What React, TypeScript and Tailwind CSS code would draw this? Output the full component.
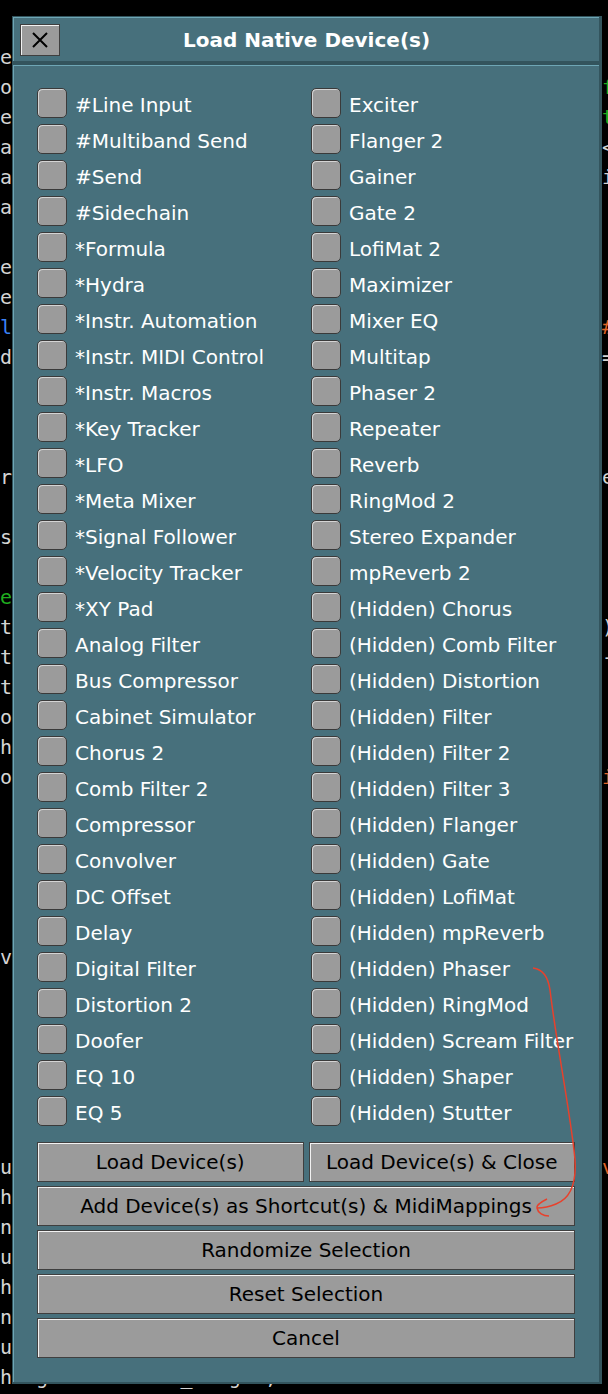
import React from 'react';

const leftDevices = [
  '#Line Input',
  '#Multiband Send',
  '#Send',
  '#Sidechain',
  '*Formula',
  '*Hydra',
  '*Instr. Automation',
  '*Instr. MIDI Control',
  '*Instr. Macros',
  '*Key Tracker',
  '*LFO',
  '*Meta Mixer',
  '*Signal Follower',
  '*Velocity Tracker',
  '*XY Pad',
  'Analog Filter',
  'Bus Compressor',
  'Cabinet Simulator',
  'Chorus 2',
  'Comb Filter 2',
  'Compressor',
  'Convolver',
  'DC Offset',
  'Delay',
  'Digital Filter',
  'Distortion 2',
  'Doofer',
  'EQ 10',
  'EQ 5',
];

const rightDevices = [
  'Exciter',
  'Flanger 2',
  'Gainer',
  'Gate 2',
  'LofiMat 2',
  'Maximizer',
  'Mixer EQ',
  'Multitap',
  'Phaser 2',
  'Repeater',
  'Reverb',
  'RingMod 2',
  'Stereo Expander',
  'mpReverb 2',
  '(Hidden) Chorus',
  '(Hidden) Comb Filter',
  '(Hidden) Distortion',
  '(Hidden) Filter',
  '(Hidden) Filter 2',
  '(Hidden) Filter 3',
  '(Hidden) Flanger',
  '(Hidden) Gate',
  '(Hidden) LofiMat',
  '(Hidden) mpReverb',
  '(Hidden) Phaser',
  '(Hidden) RingMod',
  '(Hidden) Scream Filter',
  '(Hidden) Shaper',
  '(Hidden) Stutter',
];

// code editor behind the dialog, only the edges show
interface CodeLine {
  left: string
  leftColor?: string
  right?: string
  rightColor?: string
}

const codeLines: CodeLine[] = [
  { left: 'e' },
  { left: 'o', right: 'f', rightColor: 'text-[#1fae1f]' },
  { left: 'e', right: 't', rightColor: 'text-[#1fae1f]' },
  { left: 'a', right: '<' },
  { left: 'a', right: 'i' },
  { left: 'a' },
  { left: ' ' },
  { left: 'e' },
  { left: 'e' },
  { left: 'l', leftColor: 'text-[#3b82f6]', right: '#', rightColor: 'text-[#e0662a]' },
  { left: 'd', right: '=' },
  { left: ' ' },
  { left: ' ' },
  { left: ' ' },
  { left: 'r', right: 'e' },
  { left: ' ' },
  { left: 's' },
  { left: ' ' },
  { left: 'e', leftColor: 'text-[#1fae1f]' },
  { left: 't', right: ')' },
  { left: 't', right: '-' },
  { left: 't' },
  { left: 'o' },
  { left: 'h' },
  { left: 'o', right: 'i', rightColor: 'text-[#e0662a]' },
  { left: ' ' },
  { left: ' ' },
  { left: ' ' },
  { left: ' ' },
  { left: ' ' },
  { left: 'v' },
  { left: ' ' },
  { left: ' ' },
  { left: ' ' },
  { left: ' ' },
  { left: ' ' },
  { left: ' ' },
  { left: 'u', right: 'v', rightColor: 'text-[#e0662a]' },
  { left: 'h' },
  { left: 'n' },
  { left: 'u' },
  { left: 'h' },
  { left: 'n' },
  { left: 'u' },
  { left: 'height = button_height,' },
];

function Checkbox() {
  return (
    <div className="w-[30px] h-[30px] shrink-0 rounded-[5px] border border-[#3a3a3a] bg-[#9b9b9b] shadow-[inset_1px_1px_0_#d4d4d4]" />
  );
}

function DeviceRow({ name }: { name: string }) {
  return (
    <div className="flex items-center gap-[8px] h-[30px]">
      <Checkbox />
      <span className="text-white text-[20px] leading-none whitespace-nowrap pt-[3px]">{name}</span>
    </div>
  );
}

function Button({ label }: { label: string }) {
  return (
    <div className="h-[40px] flex items-center justify-center bg-[#9b9b9b] border border-[#3f3f3f] shadow-[inset_1px_1px_0_#f2f2f2] text-black text-[20px] leading-none whitespace-nowrap">
      {label}
    </div>
  );
}

export default function App() {
  return (
    <div className="relative w-[608px] h-[1394px] bg-black overflow-hidden" style={{ fontFamily: '"DejaVu Sans", "Liberation Sans", sans-serif' }}>
      <div
        className="pt-[42px] text-[20px] leading-[30px] whitespace-pre text-[#d4d4d4]"
        style={{ fontFamily: '"DejaVu Sans Mono", "Liberation Mono", monospace' }}
      >
        {codeLines.map((line, i) => (
          <div key={i} className="h-[30px]">
            <span className={line.leftColor}>{line.left.padEnd(50, ' ')}</span>
            {line.right && <span className={line.rightColor}>{line.right}</span>}
          </div>
        ))}
      </div>

      <div className="absolute left-[12px] top-[16px] w-[590px] bg-[#33545d] pl-px pt-px pr-[3px] pb-[2px]">
        <div className="relative h-[44px] bg-[#47707c] border-t border-l border-[#6ea6b5] flex items-center">
          <div className="absolute left-[6px] top-[6px] w-[40px] h-[32px] bg-[#9b9b9b] border border-[#3f3f3f] shadow-[inset_1px_1px_0_#f2f2f2] flex items-center justify-center">
            <svg width="18" height="16" viewBox="0 0 18 16">
              <path d="M2 1 L16 15 M16 1 L2 15" stroke="#000" strokeWidth="2" />
            </svg>
          </div>
          <div className="w-full text-center text-white font-bold text-[20px] leading-none">Load Native Device(s)</div>
        </div>
        <div className="h-[4px]" />
        <div className="h-[1317px] bg-[#47707c] border-t border-l border-[#6ea6b5] pl-[23px] pt-[22px]">
          <div className="flex">
            <div className="w-[274px] flex flex-col gap-[6px]">
              {leftDevices.map((d) => (
                <DeviceRow key={d} name={d} />
              ))}
            </div>
            <div className="flex flex-col gap-[6px]">
              {rightDevices.map((d) => (
                <DeviceRow key={d} name={d} />
              ))}
            </div>
          </div>
          <div className="w-[538px] mt-[16px] flex flex-col gap-[4px]">
            <div className="grid grid-cols-2 gap-x-[5px]">
              <Button label="Load Device(s)" />
              <Button label="Load Device(s) & Close" />
            </div>
            <Button label="Add Device(s) as Shortcut(s) & MidiMappings" />
            <Button label="Randomize Selection" />
            <Button label="Reset Selection" />
            <Button label="Cancel" />
          </div>
        </div>
      </div>

      {/* hand drawn annotation arrow */}
      <svg className="absolute left-0 top-0 pointer-events-none" width="608" height="1394" viewBox="0 0 608 1394">
        <path
          d="M533 968 C542 969 548 976 550 990 C556 1040 568 1100 574 1150 C578 1180 572 1198 556 1204 C549 1207 543 1208 537 1208"
          fill="none"
          stroke="#e8412c"
          strokeWidth="1.5"
        />
        <path d="M547 1199 C541 1202 536 1205 537 1208 C538 1213 543 1216 549 1216" fill="none" stroke="#e8412c" strokeWidth="1.5" />
      </svg>
    </div>
  );
}
